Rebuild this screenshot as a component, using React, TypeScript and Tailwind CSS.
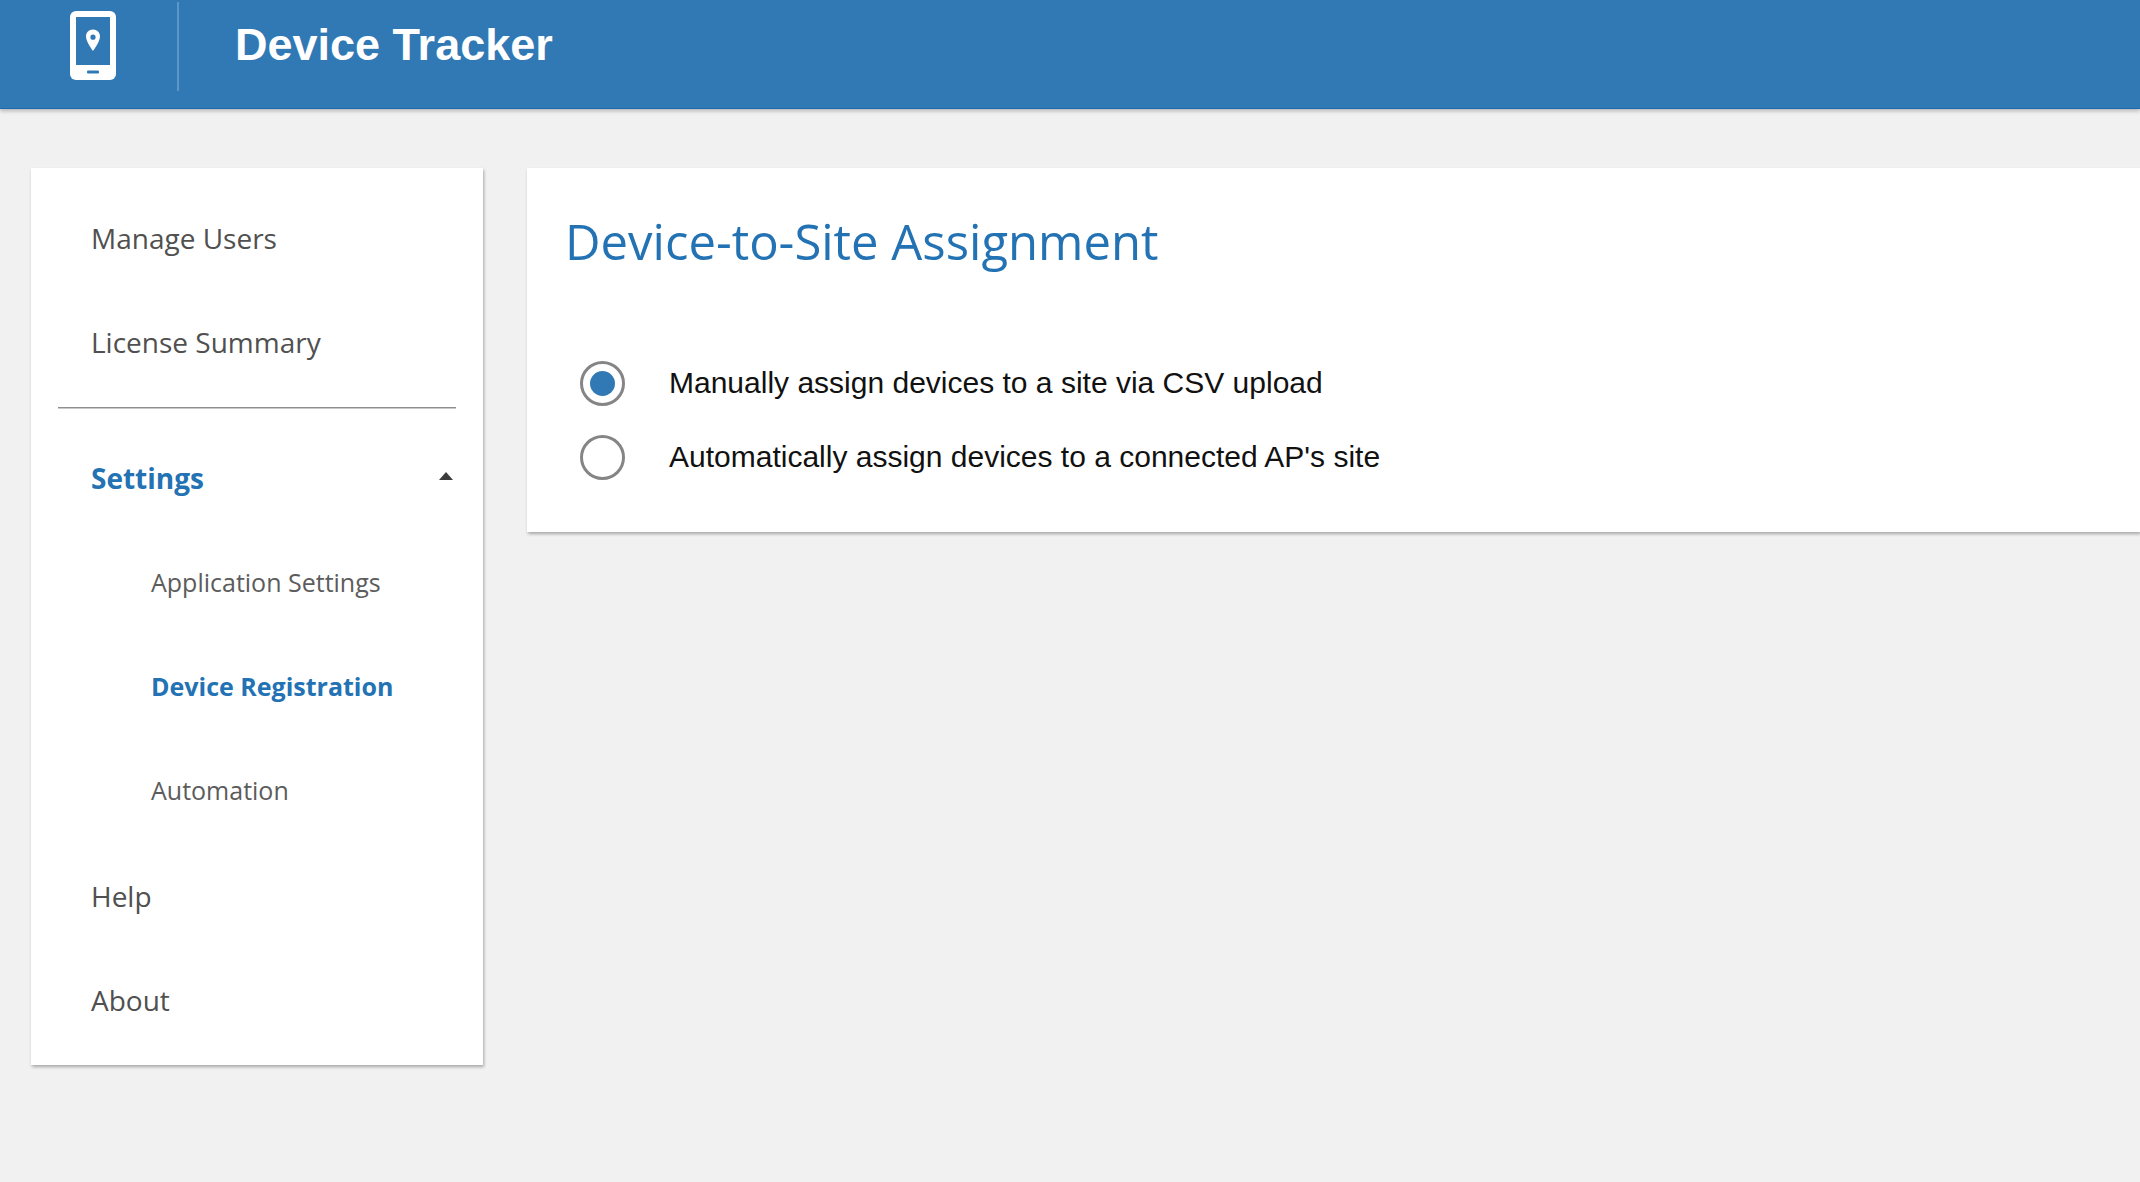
import { useState } from "react";

const cardShadow = "bg-white shadow-[1px_2px_3px_rgba(0,0,0,0.3)]";
const topLink = "flex h-[104px] items-center pl-[60px] text-[28px] leading-9 text-[#505050]";
const subLink = "flex h-[104px] items-center pl-[120px] text-[25px] leading-9";

const settingsPages = [
  { label: "Application Settings", active: false },
  { label: "Device Registration", active: true },
  { label: "Automation", active: false },
];

const modes = [
  { id: "manual", label: "Manually assign devices to a site via CSV upload" },
  { id: "auto", label: "Automatically assign devices to a connected AP's site" },
];

function DeviceLogo() {
  return (
    <svg viewBox="0 0 48 72" className="h-[72px] w-12" aria-hidden="true">
      <rect x="1" y="1" width="46" height="69" rx="6" fill="#fff" />
      <rect x="7" y="7" width="34" height="48" fill="#3079b5" />
      <rect x="18" y="60.500" width="12" height="3" rx="1" fill="#3079b5" />
      <path
        fill="#fff"
        fillRule="evenodd"
        d="M24 19.500c-4.100 0-7 3.100-7 7C17 32 24 41 24 41S31 32 31 26.500C31 22.600 28.100 19.500 24 19.500zm0 5.100a2.600 2.600 0 1 1 0 5.200 2.600 2.600 0 0 1 0-5.200z"
      />
    </svg>
  );
}

function Header() {
  return (
    <header className="flex h-[109px] items-start border-b border-[#1a6aad] bg-[#3079b5] shadow-[0_2px_4px_rgba(0,0,0,0.25)]">
      <div className="mt-[2px] flex h-[89px] w-[179px] shrink-0 border-r-2 border-[#5b96c6] pt-2 pl-[69px]">
        <DeviceLogo />
      </div>
      <h1 className="pt-5 pl-[56px] font-['Liberation_Sans',Arial,sans-serif] text-[45px] leading-[50px] font-bold text-white">
        Device Tracker
      </h1>
    </header>
  );
}

function Sidebar() {
  const [open, setOpen] = useState(true);
  return (
    <nav aria-label="Main" className={`w-[452px] shrink-0 pt-[18px] pb-[13px] ${cardShadow}`}>
      <a href="#users" className={topLink}>Manage Users</a>
      <a href="#license" className={topLink}>License Summary</a>
      <hr className="mx-[27px] mt-[13px] mb-[17px] border-t border-b border-t-[#8f8f8f] border-b-[#c8c8c8]" />
      <div className="mb-[2px]">
        <button
          type="button"
          aria-expanded={open}
          onClick={() => setOpen(!open)}
          className="flex h-[104px] w-full items-center justify-between pr-[30px] pl-[60px] text-[28px] leading-9 font-bold text-[#2372b3]"
        >
          Settings
          <svg viewBox="0 0 14 8" className="mb-1 h-2 w-[14px]" aria-hidden="true">
            <path d="M0 8 7 0l7 8z" fill="#3c3c3c" />
          </svg>
        </button>
        {open &&
          settingsPages.map((page) => (
            <a
              key={page.label}
              href="#settings"
              aria-current={page.active ? "page" : undefined}
              className={`${subLink} ${page.active ? "font-bold text-[#2372b3]" : "text-[#5c5c5c]"}`}
            >
              {page.label}
            </a>
          ))}
      </div>
      <a href="#help" className={topLink}>Help</a>
      <a href="#about" className={topLink}>About</a>
    </nav>
  );
}

function Assignment() {
  const [mode, setMode] = useState("manual");
  return (
    <main className={`min-w-0 flex-1 pt-[43px] pb-[53px] pl-[38px] ${cardShadow}`}>
      <h2 id="assignment-title" className="text-[49px] leading-[60px] text-[#2372b3]">
        Device-to-Site Assignment
      </h2>
      <div
        role="radiogroup"
        aria-labelledby="assignment-title"
        className="mt-[90px] flex flex-col gap-[30px] pl-[15px] font-['Liberation_Sans',Arial,sans-serif]"
      >
        {modes.map((option) => (
          <label key={option.id} className="flex h-11 items-center gap-11 text-[30px] leading-9 text-[#111111]">
            <input
              type="radio"
              name="mode"
              checked={mode === option.id}
              onChange={() => setMode(option.id)}
              className="grid size-[45px] shrink-0 appearance-none place-items-center rounded-full border-3 border-[#858585] before:size-[25px] before:rounded-full checked:before:bg-[#3079b5]"
            />
            {option.label}
          </label>
        ))}
      </div>
    </main>
  );
}

export default function App() {
  return (
    <div className="min-h-screen bg-[#f1f1f1] font-['Open_Sans','Segoe_UI',sans-serif]">
      <Header />
      <div className="flex items-start gap-11 pt-[59px] pl-[31px]">
        <Sidebar />
        <Assignment />
      </div>
    </div>
  );
}
